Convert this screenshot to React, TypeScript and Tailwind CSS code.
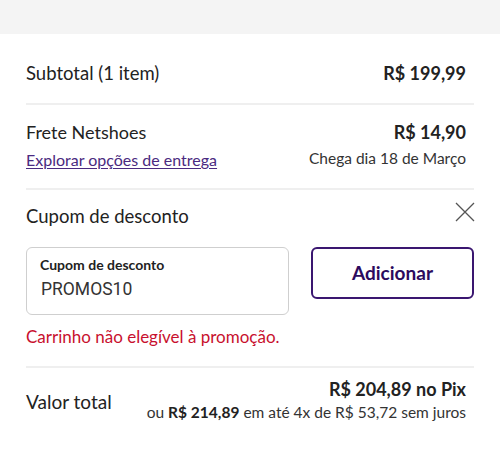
const font = { fontFamily: "Lato, 'Noto Sans', sans-serif" };

function Divider() {
  return <div className="h-[2px] bg-[#efefef]" />;
}

function CloseIcon() {
  return (
    <svg width="20" height="20" viewBox="0 0 20 20" className="text-[#555]" aria-hidden>
      <path d="M1 1 L19 19 M19 1 L1 19" stroke="currentColor" strokeWidth="1.3" fill="none" />
    </svg>
  );
}

export default function App() {
  return (
    <div className="w-[500px] h-[452px] bg-white text-[#222] overflow-hidden" style={font}>
      <div className="h-[34px] bg-[#f4f4f4]" />

      <div className="px-[26px]">
        {/* Subtotal */}
        <div className="h-[69px] flex items-center justify-between pt-[10px]">
          <span className="text-[18.5px]">Subtotal (1 item)</span>
          <span className="text-[18px] font-bold pr-[8px]">R$ 199,99</span>
        </div>
        <Divider />

        {/* Frete */}
        <div className="h-[83px] flex justify-between pt-[16px]">
          <div className="flex flex-col gap-[6px]">
            <span className="text-[18px] leading-[22px]">Frete Netshoes</span>
            <a
              href="#"
              className="text-[16px] leading-[22px] text-[#4a2a80] underline underline-offset-2"
            >
              Explorar opções de entrega
            </a>
          </div>
          <div className="flex flex-col items-end gap-[4px] pr-[8px]">
            <span className="text-[18px] leading-[22px] font-bold">R$ 14,90</span>
            <span className="text-[15.5px] leading-[22px] text-[#333]">
              Chega dia 18 de Março
            </span>
          </div>
        </div>
        <Divider />

        {/* Cupom */}
        <div className="flex items-start justify-between pt-[10px]">
          <span className="text-[18.5px] leading-[26px] mt-[3px]">Cupom de desconto</span>
          <div className="mt-[2px] -mr-[1px]">
            <CloseIcon />
          </div>
        </div>

        <div className="flex gap-[22px] mt-[18px]">
          <div className="w-[263px] h-[68px] rounded-[6px] border border-[#cfcfcf] px-[13px] pt-[8px]">
            <div className="text-[14px] font-bold leading-[18px]">Cupom de desconto</div>
            <div
              className="text-[17.5px] leading-[24px] mt-[3px] ml-[1px] text-[#333]"
              style={{ fontFamily: "Roboto, sans-serif" }}
            >
              PROMOS10
            </div>
          </div>
          <button
            type="button"
            className="w-[163px] h-[52px] rounded-[6px] border-2 border-[#3a1670] text-[19px] font-bold text-[#2c0a5e]"
          >
            Adicionar
          </button>
        </div>

        <p className="text-[17px] leading-[24px] text-[#c8102e] mt-[10px]">
          Carrinho não elegível à promoção.
        </p>

        <div className="mt-[17px]">
          <Divider />
        </div>

        {/* Total */}
        <div className="flex items-center justify-between pt-[9px]">
          <span className="text-[19px] leading-[24px] mt-[4px]">Valor total</span>
          <div className="flex flex-col items-end pr-[8px]">
            <span className="text-[18px] leading-[24px] font-bold">R$ 204,89 no Pix</span>
            <span className="text-[15.5px] leading-[22px] text-[#333]">
              ou <b className="text-[#222]">R$ 214,89</b> em até 4x de R$ 53,72 sem juros
            </span>
          </div>
        </div>
      </div>
    </div>
  );
}
